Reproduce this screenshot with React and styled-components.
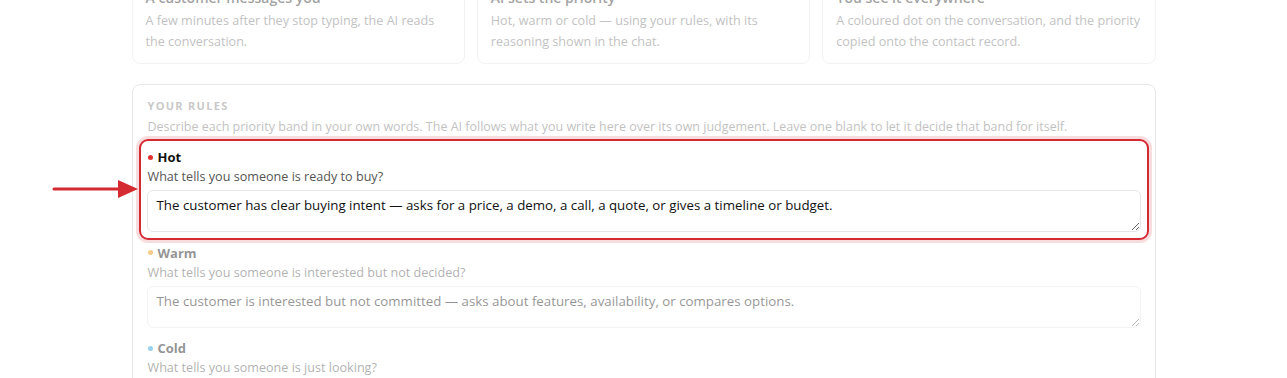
import React from 'react';
import styled, { createGlobalStyle } from 'styled-components';

const GlobalStyle = createGlobalStyle`
  html, body {
    margin: 0;
    padding: 0;
    background: #ffffff;
    overflow: hidden;
  }
  body {
    font-family: "Open Sans", "Noto Sans", sans-serif;
    color: #1a1a1a;
  }
`;

const Page = styled.div`
  max-width: 1024px;
  margin: -26px auto 0;
  display: flex;
  flex-direction: column;
  gap: 20px;
`;

const Steps = styled.div`
  display: grid;
  grid-template-columns: repeat(3, 1fr);
  gap: 12px;
  opacity: 0.45;
`;

const StepCard = styled.div`
  border: 1px solid #e4e4e4;
  border-radius: 8px;
  padding: 13px 13px 11px;
`;

const StepTitle = styled.div`
  font-size: 14px;
  font-weight: 600;
  line-height: 20px;
  color: #333;
  margin-bottom: 2px;
`;

const StepText = styled.div`
  font-size: 12.6px;
  line-height: 21px;
  color: #777;
`;

const RulesPanel = styled.section`
  border: 1px solid #e8e8e8;
  border-radius: 8px;
  padding: 15px 14px 0;
  height: 320px;
  box-sizing: border-box;
`;

const Dimmed = styled.div`
  opacity: 0.45;
`;

const Eyebrow = styled.div`
  font-size: 11px;
  font-weight: 700;
  letter-spacing: 1.3px;
  line-height: 12px;
  text-transform: uppercase;
  color: #888;
  padding-left: 1px;
`;

const Intro = styled.p`
  margin: 5px 0 10px;
  font-size: 12.5px;
  line-height: 20px;
  color: #777;
  padding-left: 1px;
`;

const RuleList = styled.div`
  display: flex;
  flex-direction: column;
  gap: 10.5px;
`;

const Rule = styled.div`
  position: relative;
  opacity: ${p => (p.$focus ? 1 : 0.45)};

  ${p => p.$focus && `
    &::after {
      content: '';
      position: absolute;
      inset: -8px;
      border: 2px solid #d42a31;
      border-radius: 9px;
      box-shadow: 0 0 0 3px rgba(212, 42, 49, 0.16);
      pointer-events: none;
    }
  `}
`;

const RuleLabel = styled.div`
  display: flex;
  align-items: center;
  gap: 5px;
  font-size: 13px;
  font-weight: 700;
  line-height: 20px;
  color: #111;
  padding-left: 1px;
`;

const Dot = styled.span`
  width: 5px;
  height: 5px;
  border-radius: 50%;
  background: ${p => p.$color};
`;

const RuleHint = styled.div`
  font-size: 12.6px;
  line-height: 20px;
  color: #555;
  margin-bottom: 3px;
  padding-left: 1px;
`;

const RuleInput = styled.textarea`
  display: block;
  width: 100%;
  height: 42px;
  box-sizing: border-box;
  border: 1px solid #e6e6e6;
  border-radius: 6px;
  padding: 5px 9px;
  font-family: inherit;
  font-size: 13.3px;
  line-height: 18px;
  color: #111;
  background: #fff;
  resize: vertical;
  outline: none;
`;

const Arrow = styled.svg`
  position: absolute;
  left: -95px;
  top: 32px;
  width: 86px;
  height: 20px;
`;

const steps = [
  { title: 'A customer messages you', text: 'A few minutes after they stop typing, the AI reads the conversation.' },
  { title: 'AI sets the priority', text: 'Hot, warm or cold — using your rules, with its reasoning shown in the chat.' },
  { title: 'You see it everywhere', text: 'A coloured dot on the conversation, and the priority copied onto the contact record.' },
];

const rules = [
  {
    name: 'Hot',
    color: '#e03131',
    hint: 'What tells you someone is ready to buy?',
    value: 'The customer has clear buying intent — asks for a price, a demo, a call, a quote, or gives a timeline or budget.',
    focus: true,
  },
  {
    name: 'Warm',
    color: '#f08c00',
    hint: 'What tells you someone is interested but not decided?',
    value: 'The customer is interested but not committed — asks about features, availability, or compares options.',
  },
  {
    name: 'Cold',
    color: '#1c9ad6',
    hint: 'What tells you someone is just looking?',
    value: 'The customer is just browsing — general questions with no sign of intent to buy soon.',
  },
];

export default function App() {
  return (
    <>
      <GlobalStyle />
      <Page>
        <Steps>
          {steps.map(s => (
            <StepCard key={s.title}>
              <StepTitle>{s.title}</StepTitle>
              <StepText>{s.text}</StepText>
            </StepCard>
          ))}
        </Steps>

        <RulesPanel>
          <Dimmed>
            <Eyebrow>Your rules</Eyebrow>
            <Intro>
              Describe each priority band in your own words. The AI follows what you write here over its own judgement. Leave one blank to let it decide that band for itself.
            </Intro>
          </Dimmed>
          <RuleList>
            {rules.map(r => (
              <Rule key={r.name} $focus={r.focus}>
                {r.focus && (
                  <Arrow viewBox="0 0 86 20">
                    <line x1="2" y1="10" x2="70" y2="10" stroke="#d42a31" strokeWidth="3" strokeLinecap="round" />
                    <polygon points="66,1 86,10 66,19" fill="#d42a31" />
                  </Arrow>
                )}
                <RuleLabel>
                  <Dot $color={r.color} />
                  {r.name}
                </RuleLabel>
                <RuleHint>{r.hint}</RuleHint>
                <RuleInput readOnly defaultValue={r.value} />
              </Rule>
            ))}
          </RuleList>
        </RulesPanel>
      </Page>
    </>
  );
}
